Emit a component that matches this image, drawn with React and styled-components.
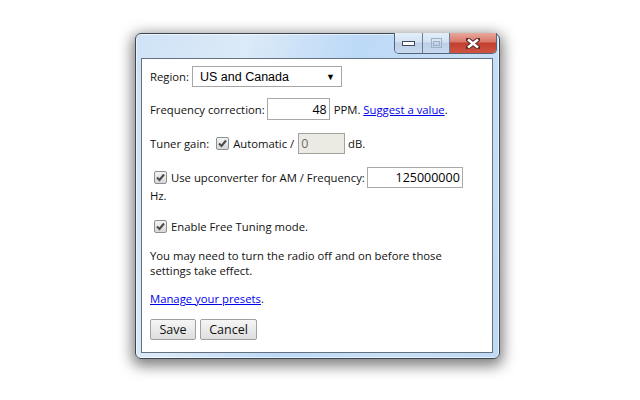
import React from 'react';
import styled, { createGlobalStyle } from 'styled-components';

const GlobalStyle = createGlobalStyle`
  html, body {
    margin: 0;
    background: #fff;
  }
`;

const Page = styled.div`
  padding: 33px 0 0 135px;
  height: 400px;
  box-sizing: border-box;
`;

const Window = styled.div`
  width: 365px;
  height: 326px;
  box-sizing: border-box;
  border: 1px solid #3e4651;
  border-radius: 6px;
  background: linear-gradient(105deg, #cfe2f6 0%, #dceaf8 25%, #bcd9f7 50%, #c9e0f6 75%, #bed9f4 100%);
  box-shadow: 0 4px 14px 3px rgba(0, 0, 0, 0.5), inset 0 0 0 1px rgba(255, 255, 255, 0.6);
  display: flex;
  flex-direction: column;
`;

const TitleBar = styled.div`
  height: 27px;
  display: flex;
  justify-content: flex-end;
  align-items: flex-start;
  padding-right: 2px;
`;

const CaptionGroup = styled.div`
  display: flex;
  margin-top: -1px;
  height: 20px;
  border: 1px solid #55657a;
  border-top: none;
  border-radius: 0 0 5px 5px;
  overflow: hidden;
`;

const CaptionButton = styled.div`
  width: ${(p) => p.$w}px;
  height: 100%;
  display: flex;
  align-items: center;
  justify-content: center;
  box-sizing: border-box;
  border-left: ${(p) => (p.$first ? 'none' : '1px solid #6b7b90')};
  background: ${(p) =>
    p.$close
      ? 'linear-gradient(#e8a89c 0%, #d8786a 45%, #c23f2f 50%, #cf5441 100%)'
      : 'linear-gradient(#e4eef9 0%, #d3e2f2 45%, #bccfe6 50%, #c8daee 100%)'};
`;

const Pane = styled.div`
  flex: 1;
  margin: 0 6px 5px 5px;
  border: 1px solid #66717f;
  background: #fff;
  padding: 7px 8px 0 8px;
  font-family: 'Segoe UI', 'Open Sans', sans-serif;
  font-size: 11.3px;
  color: #111;
`;

const Row = styled.div`
  display: flex;
  align-items: center;
  min-height: ${(p) => p.$h || 22}px;
  margin-bottom: ${(p) => p.$mb ?? 12}px;
  white-space: pre;
`;

const Block = styled.div`
  margin: ${(p) => p.$mt ?? 0}px 0 ${(p) => p.$mb ?? 12}px;
  line-height: 15px;
`;

const Select = styled.div`
  margin-left: 3px;
  width: 150px;
  height: 21px;
  box-sizing: border-box;
  border: 1px solid #a6a6a6;
  display: flex;
  align-items: center;
  justify-content: space-between;
  padding: 0 6px 0 7px;
  font-family: 'Liberation Sans', Arial, sans-serif;
  font-size: 12.5px;
  color: #000;
`;

const Arrow = styled.span`
  font-size: 9px;
`;

const TextBox = styled.div`
  width: ${(p) => p.$w}px;
  height: ${(p) => p.$h || 22}px;
  box-sizing: border-box;
  border: 1px solid ${(p) => (p.$disabled ? '#a3a39d' : '#a9a9a9')};
  background: ${(p) => (p.$disabled ? '#ebebe4' : '#fff')};
  color: ${(p) => (p.$disabled ? '#6d6d6d' : '#000')};
  display: flex;
  align-items: center;
  justify-content: ${(p) => (p.$left ? 'flex-start' : 'flex-end')};
  padding: 0 2px;
  font-size: 12.5px;
  margin: 0 ${(p) => p.$mr ?? 4}px 0 ${(p) => p.$ml ?? 2}px;
`;

const Check = styled.span`
  width: 13px;
  height: 13px;
  box-sizing: border-box;
  border: 1px solid #8e8f8f;
  border-radius: 2px;
  background: linear-gradient(#f4f4f4, #d6d6d6);
  display: inline-flex;
  align-items: center;
  justify-content: center;
  margin: 0 4px 0 ${(p) => p.$ml ?? 0}px;
`;

const Link = styled.a`
  color: #0000ee;
  text-decoration: underline;
  cursor: pointer;
`;

const Button = styled.button`
  height: 21px;
  padding: 0 6px;
  margin-right: 4px;
  border: 1px solid #a0a0a0;
  border-radius: 2px;
  background: linear-gradient(#f6f6f6, #dedede);
  font-family: 'Segoe UI', 'Open Sans', sans-serif;
  font-size: 12.5px;
  color: #111;
  width: ${(p) => p.$w}px;
`;

function CheckBox({ ml }) {
  return (
    <Check $ml={ml}>
      <svg width="9" height="9" viewBox="0 0 9 9">
        <path d="M1 4.5 L3.5 7 L8 1.5" fill="none" stroke="#4a4a4a" strokeWidth="2" />
      </svg>
    </Check>
  );
}

export default function App() {
  return (
    <>
      <GlobalStyle />
      <Page>
        <Window>
          <TitleBar>
            <CaptionGroup>
              <CaptionButton $w={27} $first>
                <svg width="13" height="6" viewBox="0 0 13 6">
                  <rect x="0.5" y="1.5" width="12" height="4" fill="#fff" stroke="#3d4b5e" />
                </svg>
              </CaptionButton>
              <CaptionButton $w={27}>
                <svg width="11" height="10" viewBox="0 0 11 10">
                  <rect x="0.5" y="0.5" width="10" height="9" fill="none" stroke="#9fb0c6" />
                  <rect x="2.5" y="3.5" width="6" height="4" fill="none" stroke="#9fb0c6" />
                </svg>
              </CaptionButton>
              <CaptionButton $w={47} $close>
                <svg width="14" height="11" viewBox="0 0 14 11">
                  <path d="M2 1.5 L12 9.5 M12 1.5 L2 9.5" stroke="#5a2a24" strokeWidth="4.5" strokeLinecap="round" />
                  <path d="M2 1.5 L12 9.5 M12 1.5 L2 9.5" stroke="#fff" strokeWidth="2.5" />
                </svg>
              </CaptionButton>
            </CaptionGroup>
          </TitleBar>
          <Pane>
            <Row $h={21} $mb={11}>
              Region:
              <Select>
                US and Canada
                <Arrow>▼</Arrow>
              </Select>
            </Row>
            <Row $h={22} $mb={13}>
              Frequency correction:
              <TextBox $w={63}>48</TextBox>
              PPM. <Link>Suggest a value</Link>.
            </Row>
            <Row $h={21} $mb={13}>
              Tuner gain:
              <CheckBox ml={7} />
              Automatic /
              <TextBox $w={47} $h={21} $left $disabled $ml={4} $mr={0}>0</TextBox>
              {' dB.'}
            </Row>
            <Row $h={21} $mb={0}>
              <CheckBox ml={4} />
              Use upconverter for AM / Frequency:
              <TextBox $w={96} $h={21}>125000000</TextBox>
            </Row>
            <Block $mb={15}>Hz.</Block>
            <Row $h={16} $mb={14}>
              <CheckBox ml={4} />
              Enable Free Tuning mode.
            </Row>
            <Block $mb={13}>
              You may need to turn the radio off and on before those
              <br />
              settings take effect.
            </Block>
            <Block $mb={13}>
              <Link>Manage your presets</Link>.
            </Block>
            <Row $h={21}>
              <Button $w={46}>Save</Button>
              <Button $w={57}>Cancel</Button>
            </Row>
          </Pane>
        </Window>
      </Page>
    </>
  );
}
